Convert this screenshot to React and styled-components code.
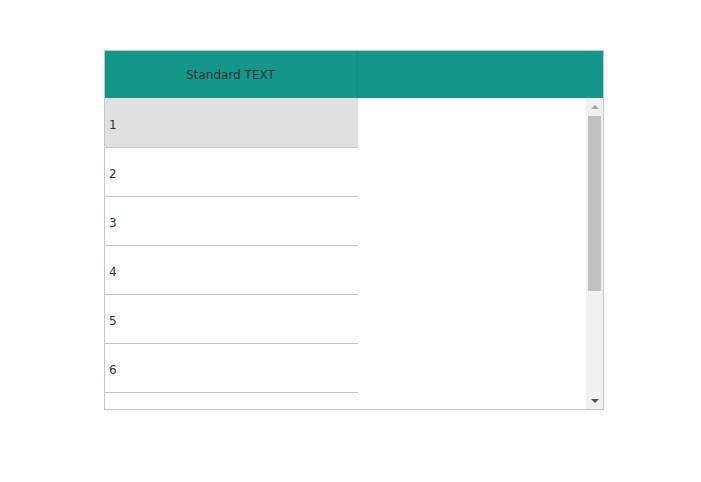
import React from 'react';
import styled, { createGlobalStyle } from 'styled-components';

const GlobalStyle = createGlobalStyle`
  html, body {
    margin: 0;
    padding: 0;
    background: #fff;
    font-family: "DejaVu Sans", Verdana, sans-serif;
  }
`;

const Page = styled.div`
  width: 701px;
  height: 482px;
  padding: 50px 0 0 104px;
  box-sizing: border-box;
`;

const Grid = styled.div`
  width: 500px;
  height: 360px;
  box-sizing: border-box;
  border: 1px solid #c6c6c6;
  display: flex;
  flex-direction: column;
`;

const Header = styled.div`
  height: 47px;
  background: #14968a;
  display: flex;
  flex-shrink: 0;
`;

const HeaderCell = styled.div`
  width: 253px;
  box-sizing: border-box;
  border-right: 1px solid rgba(0, 0, 0, 0.06);
  display: flex;
  align-items: center;
  justify-content: center;
  padding-right: 1px;
  font-size: 12px;
  color: #333;
`;

const Body = styled.div`
  flex: 1;
  display: flex;
  overflow: hidden;
`;

const Column = styled.div`
  width: 253px;
  display: flex;
  flex-direction: column;
`;

const Row = styled.div`
  height: ${({ first }) => (first ? 50 : 49)}px;
  flex-shrink: 0;
  box-sizing: border-box;
  border-bottom: 1px solid #c4c4c4;
  background: ${({ selected }) => (selected ? '#e0e0e0' : '#fff')};
  display: flex;
  align-items: center;
  padding-left: 4px;
  padding-top: ${({ first }) => (first ? 5 : 3)}px;
  font-size: 12px;
  color: #333;
`;

const Spacer = styled.div`
  flex: 1;
`;

const Scrollbar = styled.div`
  width: 17px;
  background: #f1f1f1;
  display: flex;
  flex-direction: column;
`;

const ScrollButton = styled.div`
  height: ${({ tall }) => (tall ? 16 : 15)}px;
  display: flex;
  align-items: center;
  justify-content: center;
  flex-shrink: 0;
`;

const Track = styled.div`
  flex: 1;
  padding: 2px 2px;
`;

const Thumb = styled.div`
  width: 13px;
  background: #c1c1c1;
`;

const rows = ['1', '2', '3', '4', '5', '6', '7'];

const App = () => (
  <>
    <GlobalStyle />
    <Page>
      <Grid>
        <Header>
          <HeaderCell>Standard TEXT</HeaderCell>
        </Header>
        <Body>
          <Column>
            {rows.map((r, i) => (
              <Row key={r} first={i === 0} selected={i === 0}>{i < 6 ? r : ''}</Row>
            ))}
          </Column>
          <Spacer />
          <Scrollbar>
            <ScrollButton tall>
              <svg width="8" height="5" viewBox="0 0 8 5"><path d="M0 5 L4 1 L8 5 Z" fill="#a3a3a3" /></svg>
            </ScrollButton>
            <Track>
              <Thumb style={{ height: 175 }} />
            </Track>
            <ScrollButton>
              <svg width="8" height="5" viewBox="0 0 8 5"><path d="M0 0 L8 0 L4 4 Z" fill="#505050" /></svg>
            </ScrollButton>
          </Scrollbar>
        </Body>
      </Grid>
    </Page>
  </>
);

export default App;
